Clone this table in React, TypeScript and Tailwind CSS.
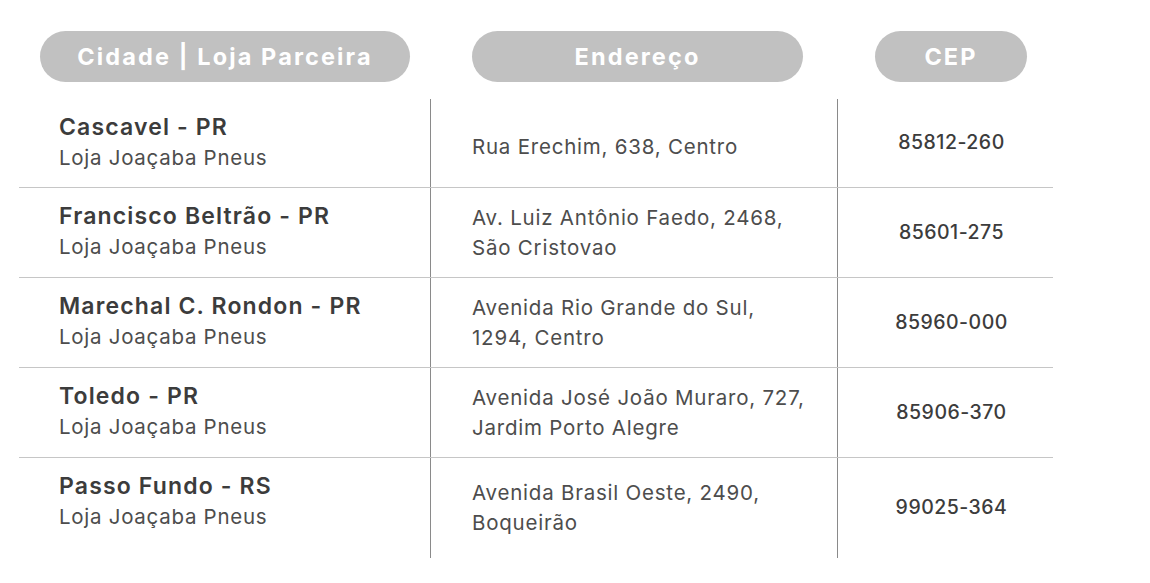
const rows = [
  { city: "Cascavel - PR", addr: ["Rua Erechim, 638, Centro"], cep: "85812-260" },
  { city: "Francisco Beltrão - PR", addr: ["Av. Luiz Antônio Faedo, 2468,", "São Cristovao"], cep: "85601-275" },
  { city: "Marechal C. Rondon - PR", addr: ["Avenida Rio Grande do Sul,", "1294, Centro"], cep: "85960-000" },
  { city: "Toledo - PR", addr: ["Avenida José João Muraro, 727,", "Jardim Porto Alegre"], cep: "85906-370" },
  { city: "Passo Fundo - RS", addr: ["Avenida Brasil Oeste, 2490,", "Boqueirão"], cep: "99025-364" },
]

function Pill({ label, className }: { label: string; className: string }) {
  return (
    <div
      className={`h-[51px] rounded-full bg-[#c1c1c1] flex items-center justify-center text-white text-[23.5px] font-bold tracking-[0.09em] ${className}`}
    >
      {label}
    </div>
  )
}

export default function App() {
  return (
    <div className="w-[1150px] h-[583px] bg-white pt-[31px] font-['Inter',sans-serif] text-[#3c3c3c]">
      <div className="flex pl-[40px]">
        <Pill label="Cidade | Loja Parceira" className="w-[370px]" />
        <Pill label="Endereço" className="ml-[62px] w-[331px]" />
        <Pill label="CEP" className="ml-[72px] w-[152px]" />
      </div>
      <div className="mt-[17px] ml-[19px] w-[1034px]">
        {rows.map((r, i) => {
          const last = i === rows.length - 1
          const height = i === 0 ? "h-[89px]" : last ? "h-[100px]" : "h-[90px]"
          return (
            <div key={r.cep} className={`flex ${height} ${last ? "" : "border-b border-[#c6c6c6]"}`}>
              <div className="w-[412px] pl-[40px] pt-[13px] border-r border-[#8a8a8a]">
                <div className="text-[23px] leading-[30px] font-semibold tracking-[0.05em]">{r.city}</div>
                <div className="text-[20.5px] leading-[31px] text-[#4d4d4d] tracking-[0.035em]">Loja Joaçaba Pneus</div>
              </div>
              <div
                className={`w-[407px] pl-[41px] flex flex-col justify-center border-r border-[#8a8a8a] ${i === 0 ? "pt-[8px]" : ""}`}
              >
                {r.addr.map((a) => (
                  <div key={a} className="text-[20.5px] leading-[30px] text-[#4d4d4d] tracking-[0.038em]">
                    {a}
                  </div>
                ))}
              </div>
              <div className="flex-1 flex items-center justify-center pl-[12px]">
                <div className="text-[19.5px] font-medium tracking-[0.025em]">{r.cep}</div>
              </div>
            </div>
          )
        })}
      </div>
    </div>
  )
}
